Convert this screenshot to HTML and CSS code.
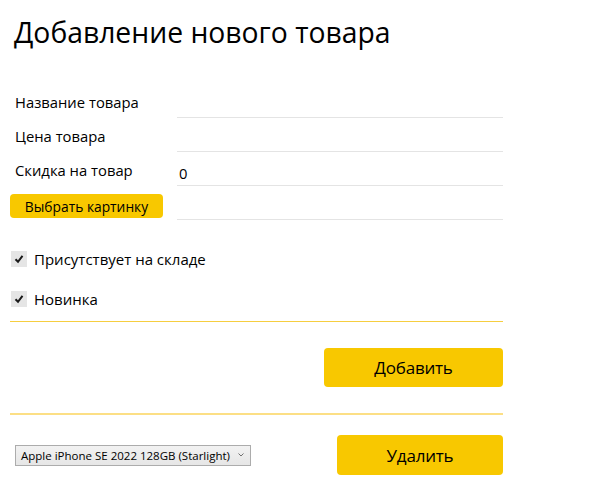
FILE: index.html
```html
<!DOCTYPE html>
<html lang="ru">
<head>
<meta charset="utf-8">
<title>Добавление нового товара</title>
<link rel="stylesheet" href="styles.css">
</head>
<body>
<div class="page">
  <h1 class="title">Добавление нового товара</h1>
  <div class="form">
    <div class="label">Название товара</div>
    <div class="field"></div>
    <div class="label">Цена товара</div>
    <div class="field"></div>
    <div class="label">Скидка на товар</div>
    <div class="field">0</div>
    <div class="label-btn"><button class="pick">Выбрать картинку</button></div>
    <div class="field"></div>
  </div>
  <div class="checks">
    <label class="check"><span class="box"><svg viewBox="0 0 16 16" width="16" height="16"><path d="M4.5 8.2 L7 10.8 L11.5 4.8" fill="none" stroke="#1a1a1a" stroke-width="2"/></svg></span>Присутствует на складе</label>
    <label class="check"><span class="box"><svg viewBox="0 0 16 16" width="16" height="16"><path d="M4.5 8.2 L7 10.8 L11.5 4.8" fill="none" stroke="#1a1a1a" stroke-width="2"/></svg></span>Новинка</label>
  </div>
  <div class="sep sep1"></div>
  <div class="add-row"><button class="big add">Добавить</button></div>
  <div class="sep sep2"></div>
  <div class="del-row">
    <div class="combo"><span class="combo-text">Apple iPhone SE 2022 128GB (Starlight)</span><svg class="caret" viewBox="0 0 6 4" width="6" height="4"><path d="M0.5 0.5 L3 3 L5.5 0.5" fill="none" stroke="#707070" stroke-width="1"/></svg></div>
    <button class="big del">Удалить</button>
  </div>
</div>
</body>
</html>
```
FILE: styles.css
```css
html, body {
  margin: 0;
  padding: 0;
  background: #ffffff;
}
body {
  font-family: "Open Sans", "Noto Sans", sans-serif;
  color: #000;
}
.page {
  width: 493px;
  margin-left: 10px;
}
.title {
  margin: 0;
  padding: 12px 0 0 4px;
  height: 84px;
  box-sizing: border-box;
  font-size: 28.3px;
  font-weight: 400;
  line-height: 40px;
}
.form {
  display: grid;
  grid-template-columns: 167px 326px;
  grid-template-rows: 34px 34px 34px 34px;
}
.label {
  padding-left: 5px;
  font-size: 14.8px;
  line-height: 20px;
  padding-top: 8px;
}
.field {
  border-bottom: 1px solid #e4e4e4;
  font-size: 14.8px;
  padding-left: 2px;
  padding-top: 11px;
  line-height: 20px;
  box-sizing: border-box;
}
.label-btn {
  display: flex;
  align-items: flex-end;
  padding-bottom: 2px;
}
.pick {
  width: 153px;
  height: 24px;
  border: none;
  border-radius: 4px;
  background: #f8c800;
  font-family: "Open Sans", "Noto Sans", sans-serif;
  font-size: 13.8px;
  color: #000;
  padding: 0;
}
.checks {
  display: flex;
  flex-direction: column;
  gap: 19px;
  padding-top: 28px;
  padding-left: 1px;
}
.check {
  display: flex;
  align-items: center;
  gap: 7px;
  height: 21px;
  font-size: 15px;
}
.box {
  width: 16px;
  height: 16px;
  background: #e5e5e5;
  display: flex;
}
.sep1 {
  margin-top: 12px;
  height: 1px;
  background: #f6ce40;
}
.add-row {
  display: flex;
  justify-content: flex-end;
  padding-top: 26px;
}
.big {
  border: none;
  border-radius: 4px;
  background: #f8c800;
  font-family: "Open Sans", "Noto Sans", sans-serif;
  font-size: 17px;
  color: #000;
  padding: 0;
  letter-spacing: -0.2px;
}
.add {
  width: 179px;
  height: 39px;
}
.sep2 {
  margin-top: 26px;
  height: 2px;
  background: #fcdf85;
}
.del-row {
  display: flex;
  justify-content: space-between;
  align-items: center;
  padding-top: 20px;
}
.combo {
  margin-left: 5px;
  width: 236px;
  height: 21px;
  box-sizing: border-box;
  border: 1px solid #acacac;
  background: linear-gradient(#f2f2f2, #e6e6e6);
  display: flex;
  align-items: center;
  justify-content: space-between;
  padding: 0 6px 0 5px;
  font-size: 11.5px;
}
.del {
  width: 166px;
  height: 40px;
}
```
